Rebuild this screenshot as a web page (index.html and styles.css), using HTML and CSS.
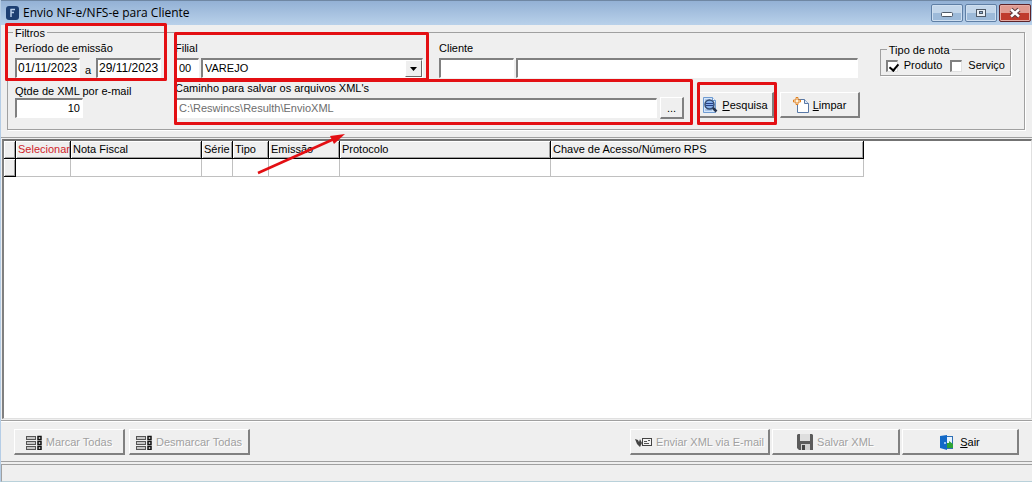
FILE: index.html
```html
<!DOCTYPE html>
<html lang="pt-BR">
<head>
    <meta charset="UTF-8">
    <meta name="viewport" content="width=device-width, initial-scale=1.0">
    <title>Envio NF-e/NFS-e para Cliente</title>
    <link rel="stylesheet" href="styles.css">
</head>
<body>
    <div class="window">
        <header class="titlebar">
            <svg class="app-icon" width="13" height="14" viewBox="0 0 13 14">
                <rect width="13" height="14" rx="3" fill="#1d3f72"/>
                <path d="M4.500 3.500h4.500M4.500 6.500h3.500M5 3v8" fill="none" stroke="#b9cfea" stroke-width="1.500"/>
            </svg>
            <h1>Envio NF-e/NFS-e para Cliente</h1>
            <div class="window-controls">
                <button type="button" aria-label="Minimizar">
                    <svg width="12" height="12" viewBox="0 0 12 12"><rect x="0.500" y="5.500" width="11" height="4" rx="1" fill="#fff" stroke="#4e5967"/></svg>
                </button>
                <button type="button" aria-label="Maximizar">
                    <svg width="12" height="12" viewBox="0 0 12 12">
                        <rect x="1.500" y="2.500" width="9" height="7" fill="#e8eef5" stroke="#4e5967"/>
                        <rect x="4.500" y="4.500" width="3" height="2" fill="#8fb0d2" stroke="#4e5967"/>
                    </svg>
                </button>
                <button type="button" class="close" aria-label="Fechar">
                    <svg width="12" height="12" viewBox="0 0 12 12">
                        <path d="M2 2.500l8 7M10 2.500l-8 7" stroke="#5c3a3e" stroke-width="4.500"/>
                        <path d="M2 2.500l8 7M10 2.500l-8 7" stroke="#fff" stroke-width="2.500"/>
                    </svg>
                </button>
            </div>
        </header>

        <main class="content">
            <section class="filters-panel">
                <fieldset class="filters">
                    <legend>Filtros</legend>
                    <div class="filter-row">
                        <div class="field period">
                            <label for="dataInicio">Período de emissão</label>
                            <div class="inputs">
                                <input class="date" id="dataInicio" type="text" value="01/11/2023">
                                <span class="separator">a</span>
                                <input class="date" type="text" value="29/11/2023" aria-label="Data final">
                            </div>
                        </div>
                        <div class="field branch">
                            <label for="filial">Filial</label>
                            <div class="inputs">
                                <input class="code" id="filial" type="text" value="00">
                                <div class="combo">
                                    <select aria-label="Nome da filial">
                                        <option>VAREJO</option>
                                    </select>
                                    <span class="combo-arrow">
                                        <svg width="7" height="4" viewBox="0 0 7 4"><path d="M0 0h7L3.500 4z"/></svg>
                                    </span>
                                </div>
                            </div>
                        </div>
                        <div class="field client">
                            <label for="cliente">Cliente</label>
                            <div class="inputs">
                                <input class="client-code" id="cliente" type="text">
                                <input class="client-name" type="text" aria-label="Nome do cliente">
                            </div>
                        </div>
                        <fieldset class="note-type">
                            <legend>Tipo de nota</legend>
                            <label><input type="checkbox" checked> Produto</label>
                            <label><input type="checkbox"> Serviço</label>
                        </fieldset>
                    </div>
                    <div class="filter-row second">
                        <div class="field quantity">
                            <label for="qtde">Qtde de XML por e-mail</label>
                            <input id="qtde" type="text" value="10">
                        </div>
                        <div class="field path">
                            <label for="caminho">Caminho para salvar os arquivos XML's</label>
                            <div class="inputs">
                                <input id="caminho" type="text" value="C:\Reswincs\Resulth\EnvioXML" disabled>
                                <button type="button" class="btn browse" aria-label="Procurar pasta">...</button>
                            </div>
                        </div>
                        <div class="actions">
                            <button type="button" class="btn search">
                                <svg width="16" height="16" viewBox="0 0 16 16">
                                    <path d="M1.500.500h9l3 3v12h-12z" fill="#d5e6fa" stroke="#6f9bd1"/>
                                    <path d="M10.500.500v3h3" fill="#fff" stroke="#6f9bd1"/>
                                    <path d="M3 3h5M3 13h7" stroke="#7fa6d8"/>
                                    <path d="M10.500 10.500l4 4" stroke="#26334d" stroke-width="2.500"/>
                                    <circle cx="7.500" cy="7.500" r="4.500" fill="#86b0ea" stroke="#31496f" stroke-width="1.500"/>
                                    <path d="M4 6.500h7M4 8.500h7" stroke="#273f87"/>
                                </svg>
                                <span><u>P</u>esquisa</span>
                            </button>
                            <button type="button" class="btn clear">
                                <svg width="16" height="16" viewBox="0 0 16 16">
                                    <path d="M4.500 2.500h7l4 4v9h-11z" fill="#fff" stroke="#5878a6"/>
                                    <path d="M11.500 2.500v4h4" fill="#dce8f8" stroke="#5878a6"/>
                                    <path d="M3 .500h2v2.500h2.500v2H5v2.500H3V5H.500V3H3z" fill="#fff3df" stroke="#e08020"/>
                                </svg>
                                <span><u>L</u>impar</span>
                            </button>
                        </div>
                    </div>
                </fieldset>
            </section>

            <section class="grid">
                <table>
                    <colgroup>
                        <col class="col-mark">
                        <col class="col-select">
                        <col class="col-invoice">
                        <col class="col-series">
                        <col class="col-type">
                        <col class="col-date">
                        <col class="col-protocol">
                        <col class="col-key">
                    </colgroup>
                    <thead>
                        <tr>
                            <th></th>
                            <th class="selected">Selecionar</th>
                            <th>Nota Fiscal</th>
                            <th>Série</th>
                            <th>Tipo</th>
                            <th>Emissão</th>
                            <th>Protocolo</th>
                            <th>Chave de Acesso/Número RPS</th>
                        </tr>
                    </thead>
                    <tbody>
                        <tr>
                            <td class="mark"></td>
                            <td></td>
                            <td></td>
                            <td></td>
                            <td></td>
                            <td></td>
                            <td></td>
                            <td></td>
                        </tr>
                    </tbody>
                </table>
            </section>

            <footer class="toolbar">
                <button type="button" class="btn mark-all" disabled>
                    <svg width="16" height="15" viewBox="0 0 16 15">
                        <g fill="#c4c4c4" stroke="#555">
                            <rect x=".5" y="1.500" width="9" height="3"/>
                            <rect x=".5" y="6.500" width="9" height="3"/>
                            <rect x=".5" y="11.500" width="9" height="3"/>
                        </g>
                        <g fill="#eee" stroke="#111" stroke-width="1.500">
                            <rect x="12" y="1.500" width="3" height="3"/>
                            <rect x="12" y="6.500" width="3" height="3"/>
                            <rect x="12" y="11.500" width="3" height="3"/>
                        </g>
                    </svg>
                    <span>Marcar Todas</span>
                </button>
                <button type="button" class="btn unmark-all" disabled>
                    <svg width="16" height="15" viewBox="0 0 16 15">
                        <g fill="#c4c4c4" stroke="#555">
                            <rect x=".5" y="1.500" width="9" height="3"/>
                            <rect x=".5" y="6.500" width="9" height="3"/>
                            <rect x=".5" y="11.500" width="9" height="3"/>
                        </g>
                        <g fill="#eee" stroke="#111" stroke-width="1.500">
                            <rect x="12" y="1.500" width="3" height="3"/>
                            <rect x="12" y="6.500" width="3" height="3"/>
                            <rect x="12" y="11.500" width="3" height="3"/>
                        </g>
                    </svg>
                    <span>Desmarcar Todas</span>
                </button>
                <button type="button" class="btn send" disabled>
                    <svg width="17" height="11" viewBox="0 0 17 11">
                        <path d="M0 2l3 1 1 2 1-3 2 4-2 4-3-3z" fill="#444"/>
                        <rect x="7.500" y="1.500" width="9" height="7" fill="#f4f4f4" stroke="#444"/>
                        <path d="M9 6.500h5M9 4.500h3M13 3.500h2" stroke="#555"/>
                    </svg>
                    <span>Enviar XML via E-mail</span>
                </button>
                <button type="button" class="btn save" disabled>
                    <svg width="16" height="16" viewBox="0 0 16 16">
                        <path d="M1 0h14l1 1v15H2l-2-2V1z" fill="#5b5b5b"/>
                        <rect x="3" y="0" width="10" height="7" fill="#dedede"/>
                        <rect x="4" y="10" width="9" height="6" fill="#cfcfcf"/>
                        <rect x="5" y="11" width="3" height="5" fill="#444"/>
                    </svg>
                    <span>Salvar XML</span>
                </button>
                <button type="button" class="btn exit">
                    <svg width="14" height="15" viewBox="0 0 14 15">
                        <rect x="5.500" y="1.500" width="7" height="12" fill="#e6f2ff" stroke="#2d6fb5"/>
                        <path d="M7 8h2V6l4 3v4H7z" fill="#2ca336"/>
                        <path d="M0 1l7-1v15l-7-2z" fill="#1269c7"/>
                        <circle cx="5" cy="8" r="1" fill="#bfe0ff"/>
                    </svg>
                    <span><u>S</u>air</span>
                </button>
            </footer>
        </main>
        <div class="statusbar"></div>

        <!-- Marcações do tutorial sobre a tela -->
        <svg class="highlights" width="780" height="180" viewBox="0 0 780 180">
            <g fill="none" stroke="#e30f13" stroke-width="3" stroke-linejoin="round">
                <rect x="6.500" y="24.500" width="159" height="55"/>
                <rect x="175.500" y="33.500" width="252" height="46"/>
                <rect x="175.500" y="80.500" width="516" height="43"/>
                <rect x="698.500" y="83.500" width="77" height="40"/>
                <path d="M258 173l76-34" stroke-width="2.500"/>
            </g>
            <path d="M345 134l-15 2 4 8z" fill="#e30f13"/>
        </svg>
    </div>
</body>
</html>
```

FILE: styles.css
```css
* {
    margin: 0;
    padding: 0;
    box-sizing: border-box;
}

body {
    font-family: "Liberation Sans", Arial, sans-serif;
    font-size: 11px;
    line-height: 13px;
    color: #000;
    background-color: #efefef;
}

button,
input,
select {
    font: inherit;
    color: inherit;
}

.window {
    position: relative;
    display: flex;
    flex-direction: column;
    min-height: 100vh;
    border-left: 1px solid #b5cde6;
}

/* Barra de título */
.titlebar {
    display: flex;
    align-items: center;
    height: 25px;
    padding: 0 1px 0 5px;
    border-top: 1px solid #6f87a3;
    background: linear-gradient(#93b1d5, #b9d1ea);
}

.titlebar h1 {
    flex: 1;
    margin-left: 4px;
    font-family: "Open Sans", "Noto Sans", sans-serif;
    font-size: 12px;
    font-weight: normal;
    line-height: 16px;
}

.window-controls {
    display: flex;
    gap: 2px;
}

.window-controls button {
    display: flex;
    align-items: center;
    justify-content: center;
    width: 32px;
    height: 18px;
    border: 1px solid #5f7fa5;
    border-radius: 2px;
    background: linear-gradient(#c3d6ea 50%, #9dbad9 50%);
    box-shadow: inset 0 0 0 1px #cfdff0;
}

.window-controls .close {
    border-color: #5c2329;
    background: linear-gradient(#e09a90 50%, #bf3a2c 50%);
    box-shadow: inset 0 0 0 1px #e5aaa3;
}

.content {
    display: flex;
    flex: 1;
    flex-direction: column;
}

/* Filtros */
.filters-panel {
    padding: 0 7px 7px 6px;
    border-bottom: 1px solid #a0a0a0;
}

fieldset {
    min-width: 0;
    border: 1px solid #a0a0a0;
    box-shadow: 1px 1px 0 #fff;
}

legend {
    padding: 2px 2px 0;
}

.filters {
    padding: 2px 13px 10px 7px;
}

.filters > legend {
    margin-left: -2px;
}

.filter-row {
    display: flex;
    align-items: flex-start;
}

.filter-row.second {
    margin-top: 4px;
}

.field label {
    display: block;
}

.inputs {
    display: flex;
    align-items: center;
    gap: 2px;
}

input[type="text"] {
    height: 20px;
    padding: 0 2px 1px;
    border: 1px solid #fff;
    border-top: 2px solid #808080;
    border-left: 2px solid #808080;
    border-radius: 0;
    outline: none;
    background-color: #fff;
}

input[type="text"]:disabled {
    color: #6d6d6d;
}

.period {
    width: 160px;
}

.period .inputs,
.branch .inputs,
.client .inputs {
    margin-top: 3px;
}

input.date {
    width: 65px;
    padding: 0 1px 1px;
    font-size: 12px;
}

.separator {
    width: 12px;
    padding-top: 4px;
    text-align: center;
}

.branch {
    width: 264px;
}

.code {
    width: 24px;
}

.combo {
    display: flex;
    width: 222px;
    height: 20px;
    border: 1px solid #fff;
    border-top: 2px solid #808080;
    border-left: 2px solid #808080;
    background-color: #fff;
}

.combo select {
    flex: 1;
    padding: 0 2px;
    border: none;
    outline: none;
    appearance: none;
    background: none;
}

.combo-arrow {
    display: flex;
    align-items: center;
    justify-content: center;
    width: 17px;
    border: 1px solid #fff;
    border-right-color: #696969;
    border-bottom-color: #696969;
    background-color: #efefef;
}

.client {
    flex: 1;
    margin-right: 22px;
}

.client-code {
    width: 75px;
}

.client-name {
    flex: 1;
}

.note-type {
    display: flex;
    gap: 8px;
    padding: 2px 5px 3px;
}

.note-type legend {
    margin-left: 1px;
}

.note-type label {
    display: flex;
    align-items: center;
    gap: 6px;
}

input[type="checkbox"] {
    width: 12px;
    height: 12px;
    border: 1px solid #e0e0e0;
    border-top: 2px solid #808080;
    border-left: 2px solid #808080;
    appearance: none;
    background-color: #fff;
}

input[type="checkbox"]:checked::before {
    content: "";
    display: block;
    width: 4px;
    height: 7px;
    margin-left: 3px;
    border: solid #000;
    border-width: 0 2px 2px 0;
    transform: rotate(40deg);
}

.quantity {
    width: 160px;
    padding-top: 3px;
}

.quantity input {
    width: 68px;
    text-align: right;
}

.path #caminho {
    width: 482px;
}

.path .inputs {
    gap: 3px;
    margin-top: 2px;
}

.actions {
    display: flex;
    gap: 6px;
    margin-top: 10px;
    margin-left: 13px;
}

.btn {
    display: flex;
    align-items: center;
    justify-content: center;
    gap: 4px;
    height: 26px;
    padding-top: 1px;
    border: 1px solid #fff;
    border-right: 2px solid #808080;
    border-bottom: 2px solid #808080;
    background-color: #efefef;
    white-space: nowrap;
}

.btn:disabled {
    color: #a0a0a0;
    text-shadow: 1px 1px 0 #fff;
}

.browse {
    width: 24px;
    height: 22px;
}

.search {
    width: 77px;
}

.clear {
    width: 80px;
}

/* Tabela de notas */
.grid {
    flex: 1;
    margin-top: 1px;
    margin-left: 1px;
    border-top: 2px solid #737373;
    border-left: 2px solid #808080;
    border-right: 1px solid #e0e0e0;
    border-bottom: 1px solid #e0e0e0;
    background-color: #fff;
}

table {
    width: 860px;
    border-collapse: separate;
    border-spacing: 0;
    table-layout: fixed;
}

th {
    height: 18px;
    padding: 0 2px;
    border-right: 1px solid #000;
    border-bottom: 1px solid #000;
    background-color: #efefef;
    box-shadow: inset 1px 1px 0 #fff, inset -1px -1px 0 #a0a0a0;
    font-weight: normal;
    text-align: left;
    white-space: nowrap;
}

th.selected {
    color: #d01f2b;
}

td {
    height: 18px;
    border-right: 1px solid #c0c0c0;
    border-bottom: 1px solid #c0c0c0;
}

td.mark {
    border-color: #000;
    background-color: #efefef;
    box-shadow: inset 1px 1px 0 #fff, inset -1px -1px 0 #a0a0a0;
}

.col-mark { width: 12px; }
.col-select { width: 55px; }
.col-invoice { width: 131px; }
.col-series { width: 31px; }
.col-type { width: 36px; }
.col-date { width: 71px; }
.col-protocol { width: 211px; }
.col-key { width: 313px; }

/* Botões inferiores */
.toolbar {
    display: flex;
    margin-top: 1px;
    padding: 8px 13px 6px;
    border-top: 1px solid #a0a0a0;
    border-bottom: 1px solid #a0a0a0;
    box-shadow: inset 0 1px 0 #fff;
}

.mark-all {
    width: 111px;
}

.unmark-all {
    width: 121px;
    margin-left: 4px;
}

.send {
    width: 140px;
    margin-left: auto;
}

.save {
    width: 128px;
    margin-left: 2px;
}

.exit {
    gap: 6px;
    width: 117px;
    margin-left: 2px;
}

.statusbar {
    height: 18px;
    margin-top: 2px;
    border-top: 1px solid #a0a0a0;
    border-left: 1px solid #a0a0a0;
    border-bottom: 1px solid #b9d1da;
}

.highlights {
    position: absolute;
    top: 0;
    left: -1px;
    pointer-events: none;
}
```
